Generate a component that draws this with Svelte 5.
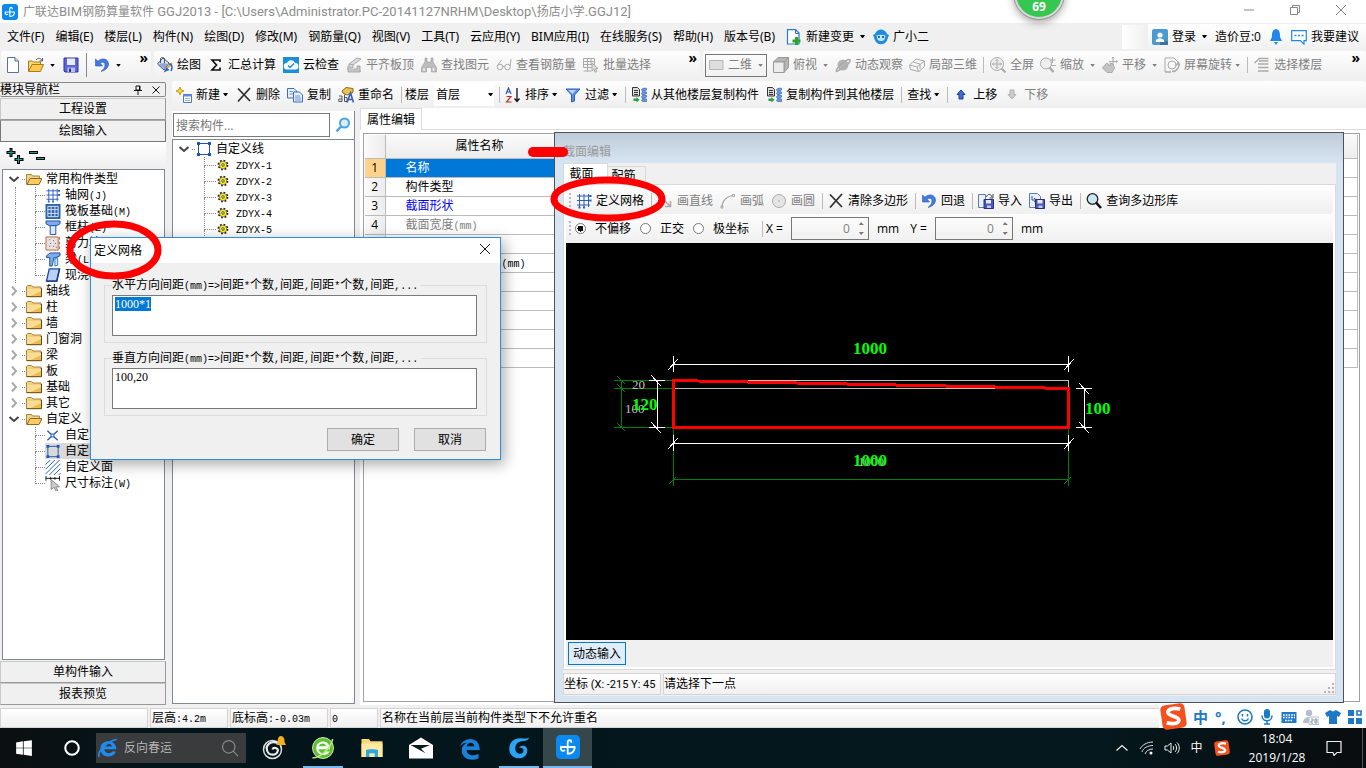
<script lang="ts">
  import { onMount } from "svelte";

  type Item = {
    icon?: string;
    text?: string;
    arrow?: boolean;
    off?: boolean;
    sep?: boolean;
    tight?: boolean;
  };

  const menus = [
    "文件(F)", "编辑(E)", "楼层(L)", "构件(N)", "绘图(D)", "修改(M)", "钢筋量(Q)",
    "视图(V)", "工具(T)", "云应用(Y)", "BIM应用(I)", "在线服务(S)", "帮助(H)", "版本号(B)",
  ];

  const drawBar: Item[] = [
    { icon: "paint", text: "绘图" },
    { icon: "sum", text: "汇总计算" },
    { icon: "cloud", text: "云检查" },
    { icon: "align", text: "平齐板顶", off: true },
    { icon: "binoculars", text: "查找图元", off: true },
    { icon: "glasses", text: "查看钢筋量", off: true },
    { icon: "batch", text: "批量选择", off: true },
  ];

  const viewBar: Item[] = [
    { icon: "cube", text: "俯视", arrow: true, off: true },
    { icon: "orbit", text: "动态观察", off: true },
    { icon: "part3d", text: "局部三维", off: true },
    { sep: true },
    { icon: "full", text: "全屏", off: true },
    { icon: "zoom", text: "缩放", arrow: true, off: true },
    { icon: "pan", text: "平移", arrow: true, off: true },
    { icon: "rotate", text: "屏幕旋转", arrow: true, tight: true, off: true },
    { sep: true },
    { icon: "floors", text: "选择楼层", off: true },
  ];

  const editBar: Item[] = [
    { icon: "new", text: "新建", arrow: true, tight: true },
    { icon: "cross", text: "删除" },
    { icon: "copy", text: "复制" },
    { icon: "rename", text: "重命名" },
    { sep: true },
  ];

  const sortBar: Item[] = [
    { sep: true },
    { icon: "sort", text: "排序", arrow: true, tight: true },
    { icon: "filter", text: "过滤", arrow: true, tight: true },
    { sep: true },
    { icon: "fromFloor", text: "从其他楼层复制构件" },
    { icon: "fromFloor", text: "复制构件到其他楼层" },
    { sep: true },
    { text: "查找", arrow: true, tight: true },
    { sep: true },
    { icon: "up", text: "上移" },
    { icon: "down", text: "下移", off: true },
  ];

  const sectionBar: Item[] = [
    { icon: "grid", text: "定义网格" },
    { sep: true },
    { icon: "line", text: "画直线", off: true },
    { icon: "arc", text: "画弧", off: true },
    { icon: "circle", text: "画圆", off: true },
    { sep: true },
    { icon: "cross", text: "清除多边形" },
    { sep: true },
    { icon: "undo", text: "回退" },
    { sep: true },
    { icon: "importIcon", text: "导入" },
    { icon: "exportIcon", text: "导出" },
    { sep: true },
    { icon: "query", text: "查询多边形库" },
  ];

  const tree = [
    {
      text: "常用构件类型",
      open: true,
      guide: true,
      children: [
        ["grid", "轴网(J)"],
        ["raft", "筏板基础(M)"],
        ["column", "框柱(Z)"],
        ["wall", "剪力墙(Q)"],
        ["beam", "梁(L)"],
        ["slab", "现浇板(B)"],
      ],
    },
    { text: "轴线" },
    { text: "柱" },
    { text: "墙" },
    { text: "门窗洞" },
    { text: "梁" },
    { text: "板" },
    { text: "基础" },
    { text: "其它" },
    {
      text: "自定义",
      open: true,
      children: [
        ["point", "自定义点"],
        ["poly", "自定义线(X)"],
        ["hatch", "自定义面"],
        ["dim", "尺寸标注(W)"],
      ],
    },
  ];

  const members = ["ZDYX-1", "ZDYX-2", "ZDYX-3", "ZDYX-4", "ZDYX-5"];

  const props = [
    { text: "名称", kind: "current" },
    { text: "构件类型" },
    { text: "截面形状", kind: "key" },
    { text: "截面宽度(mm)", kind: "readonly" },
    { text: "截面高度(mm)", kind: "readonly" },
    { text: "轴线距左边线距离(mm)" },
    { text: "其它钢筋" },
    { text: "备注" },
    { text: "其它属性" },
    { text: "锚固搭接" },
    { text: "显示样式" },
  ];

  const offsets = ["不偏移", "正交", "极坐标"];
  let offset = $state("不偏移");
  let horizontal = $state("1000*1");
  let vertical = $state("100,20");
  let search = $state("");
  let first: HTMLTextAreaElement;

  onMount(() => {
    first.focus();
    first.select();
  });

  const icons: Record<string, string> = {
    file: `<path d="M2.500 .5h7.500l3.500 3.500v11.500h-11z" fill="#fff" stroke="#5a7298"/><path d="M10 .5v3.500h3.500" fill="#cfdcf0" stroke="#5a7298"/>`,
    open: `<path d="M.5 14V4h4l1 1h7v3" fill="#f7d774" stroke="#a87b1c"/><path d="M.5 14.500 4 7.500h11.500l-3 7z" fill="#fbc94e" stroke="#a87b1c"/><path d="M8 3c2-2.500 5-2 6 .5M14.500 1v3h-3" fill="none" stroke="#555"/>`,
    save: `<path d="M1 1h14v14H2l-1-1z" fill="#5b67d8" stroke="#2f3792"/><path d="M4 1.500h8V8H4z" fill="#e8ecfb"/><path d="M4.500 10.500h7.500V15H4.500z" fill="#b9c0ea"/><path d="M6 11.500h2V15H6z" fill="#2f3792"/>`,
    undo: `<path d="M1.500 2v7H8.500L6.300 6.500C8 4.500 11 5 11 8c0 3-2 4.500-4 6.500 4-1 7.500-3.500 7.500-7.500 0-5-6.500-7-10.500-2.800z" fill="#3f7ae0" stroke="#2a58b5" stroke-width=".6"/>`,
    paint: `<path d="M.5 7 6 1l6 5-5 7z" fill="#dfe7f4" stroke="#46536b"/><path d="M3.500 6V2c0-2 4-2 4 0v4" fill="none" stroke="#46536b"/><path d="M1.500 7l5-1 5 1-4.500 5z" fill="#8aa6d6"/><path d="M15 6 9.500 11.500" stroke="#e2a32b" stroke-width="2"/><path d="m9.500 10.500-3 5 6-2.500z" fill="#2b62c4"/><path d="M12 7c3.500 0 3.500 4 2 7" stroke="#2b62c4" fill="none" stroke-width="1.500"/>`,
    sum: `<path d="M12 5V3H4l4.500 5L4 13h8v-2.500" fill="none" stroke="#111" stroke-width="1.700"/>`,
    cloud: `<path d="M0 0h16v16H0z" fill="#1d8fd6"/><path d="M4 12.500a3.200 3.200 0 0 1 0-6.400c1-3.600 6.500-4 8 0a3.200 3.200 0 0 1 .5 6.400z" fill="#fff"/><path d="m5 8.500 2 2 4-4" fill="none" stroke="#1d8fd6" stroke-width="1.500"/>`,
    align: `<path d="m3 7 8-6 4 1-8 6zM3 7v3l4 1V8M1 12l4-2v4h10" fill="#ddd" stroke="#a9a9a9"/><path d="M2 9v6h12V9h-3v3H8" fill="#c4c4c4" stroke="#a9a9a9"/>`,
    binoculars: `<path d="M4 1h2v4h4V1h2v4l3.500 5.500V15h-5v-4.500h-5V15h-5v-4.500L4 5z" fill="#bdbdbd" stroke="#999" stroke-width=".6"/><path d="M3 11v3M12.500 11v3" stroke="#eee" stroke-width="1.500"/>`,
    glasses: `<circle cx="4" cy="10" r="2.800"/><circle cx="11.500" cy="10" r="2.800"/><path d="M6.800 9.500h2M1.500 8.500l4-5.500M14 9l1-7"/>`,
    batch: `<path d="M.5 1.500h11v9H.5zM.5 4.500h11M.5 7.500h11M4.500 1.500v13M8 1.500v7M.5 14h8" /><path d="m9 6 6 5.500-2.500.2 1.300 3-1.600.6-1.200-3L9 14z" fill="#ddd"/>`,
    rect2d: `<path d="M1.500 3.500h13.500v9h-13.500z" fill="#ddd" stroke="#b5b5b5"/>`,
    cube: `<path d="m.5 5 4.500-4.500h10.500l-4.500 4.500zM11 5l4.500-4.500v10l-4.500 5z" fill="#b5b5b5" stroke="#999"/><path d="M.5 5h10.500v10.500H.5z" fill="#ececec" stroke="#999"/>`,
    orbit: `<circle cx="8" cy="8" r="5.500" fill="#b5b5b5" stroke="none"/><path d="M1.500 14.500c-2-2 10-13 13-12s-5 9-13 12z" stroke-width="1.500"/>`,
    part3d: `<path d="m.5 8 6.500-6 8.500 2v5.500l-5.500 5-8.500-2zM.5 8l7.500 2 7.500-6M8 10l1.500 4.500M4 5l7 2v5"/>`,
    full: `<circle cx="7" cy="7" r="6.500" fill="#eee"/><path d="M7 2.500v9M2.500 7h9M5.500 4 7 2.500 8.500 4M5.500 10 7 11.500 8.500 10M4 5.500 2.500 7 4 8.500M10 5.500 11.500 7 10 8.500"/><path d="m11.500 11.500 4 4" stroke-width="2"/>`,
    zoom: `<circle cx="6" cy="6.500" r="5.500" fill="#eee"/><path d="m9.500 10.500 4 4.500" stroke-width="2.500"/><path d="M10 3h5.500M12.500 0v6M11 8.500h5"/>`,
    pan: `<path d="m3 8 2-2 3 3V6l3 1 1.500 4-2.500 4.500H5l-4.500-4.500z" fill="#c4c4c4"/><path d="M11 0v8M7 4.500h8.500M10 1.500l1-1.500 1 1.500M14 3.500l1.500 1-1.500 1"/>`,
    rotate: `<path d="M1 15V1h9l4 4" stroke-width="1"/><circle cx="8" cy="8" r="4"/><path d="M8 14.500a6.500 6.500 0 0 0 6.500-8.500M12 8.500l2.300-3 1.700 3M1 15h6" stroke-width="1.500"/>`,
    floors: `<path d="m.5 6 5-4.500h9M4 7h10.500M4 10.500h10.500M4 14h10.500M5 4h9.500" stroke-width="1.500"/>`,
    new: `<path d="M4 0 5.200 2.800 8 4 5.200 5.200 4 8 2.800 5.200 0 4l2.800-1.200z" fill="#ffd83b" stroke="#b58a00" stroke-width=".8"/><path d="M7.500 7.500h8v8h-8z" fill="#fff" stroke="#5277b8"/><path d="M7.500 7.500h8v2h-8z" fill="#5b8be0"/><path d="M9 11.500h5M9 13.500h5" stroke="#9bb5df"/>`,
    cross: `<path d="M2 1.500 14 14M14 1 2 14.500" stroke="#333" stroke-width="1.800" fill="none"/>`,
    copy: `<path d="M.5 1.500h6.500l2.500 2.500v7h-9z" fill="#e6effc" stroke="#3f6cb5"/><path d="M6.500 5h6l3 3v7h-9z" fill="#e6effc" stroke="#3f6cb5"/><path d="M8 9h5M8 11h6M8 13h6M2.500 4.500H6M2.500 7H6" stroke="#6d93d2"/>`,
    rename: `<path d="m4 4 4-3.500 7 1v4L9 8 5 6z" fill="#e8c255" stroke="#8a6a16"/><path d="M1 9h3v5.500H.8V12H4M6.500 7.500v7h2.500v-4H6.500" fill="none" stroke="#555"/><path d="m9 15.500 3.500-9.500 3 9.500M10.500 12.500h4" fill="none" stroke="#2b5fc0" stroke-width="1.600"/>`,
    sort: `<path d="M1 7 3.500 1 6 7M2 5h3" fill="none" stroke="#2a55c8" stroke-width="1.200"/><path d="M1.500 9.500H6l-4.500 5.500h5" fill="none" stroke="#b33227" stroke-width="1.200"/><path d="M12 1v13M9.500 11.500 12 14.500l2.500-3" fill="none" stroke="#111" stroke-width="1.300"/>`,
    filter: `<path d="M1 2h14L9.500 8v6l-3 1V8z" fill="#5a8fe8" stroke="#2c5fb8"/><path d="M3 3h8L7.500 7z" fill="#bcd6fb"/>`,
    fromFloor: `<path d="M1.500.5h5l2 2V9h-7z" fill="#ddd" stroke="#333"/><path d="M3 3.500h4M3 5.500h4M3 7.500h4" stroke="#333"/><path d="M2.500 11.500h3v-1.500l3 2.700-3 2.800v-1.500h-3z" fill="#28a03c"/><path d="M10.500 2.500c1-1.500 4-1.500 5-1v1.500l-4 1.500zM10.500 6c1-1.500 4-1.500 5-1v1.500l-4 1.500zM10.500 9.500c1-1.500 4-1.500 5-1v1.500l-4 1.500zM10.500 13c1-1.500 4-1.500 5-1v2.500h-4z" fill="#6ea2e6" stroke="#2c5fa8" stroke-width=".7"/>`,
    up: `<path d="M8 3 12 7.500H10V12H6V7.500H4z" fill="#3d6fd8" stroke="#1c3f94"/>`,
    down: `<path d="M8 12 12 7.500H10V3H6v4.500H4z" fill="#ccc" stroke="#b0b0b0"/>`,
    grid: `<path d="M1 3h13M1 7.500h13M1 12h13M3.500 1v13M8 1v13M12.500 1v13" stroke="#2c5fc0" stroke-width="1" fill="none"/><path d="M13.500 2h2v2h-2zM13.500 6.500h2v2h-2zM2.500 13.500h2v2h-2zM7 13.500h2v2H7z" fill="#2c5fc0"/>`,
    line: `<path d="m2 2 11 11M13.500 8v5.500H8" stroke-width="1.500"/>`,
    arc: `<path d="M2 14C2 8 7 3 13 2.500" stroke-width="1.200"/><path d="M1 13h2v2H1zM12.500 1.500h2v2h-2z"/>`,
    circle: `<circle cx="8" cy="8" r="6.500" fill="#e4e4e4"/><path d="M7 8h2"/>`,
    importIcon: `<path d="M.5 1.500h7v13h-7z" fill="#eaf1fc" stroke="#5b7bb4"/><path d="M8.500 4c1-3.500 4.500-3.500 5.500 0M15 1v4h-3.500" stroke="#444" fill="none"/><path d="M6 6.500h9.500v9H6z" fill="#4a56b8" stroke="#283080"/><path d="M8 7h5v3.500H8z" fill="#e6e9fa"/><path d="M9 12.500h4V15H9z" fill="#c5caea"/>`,
    exportIcon: `<path d="M.5.500h8l3 3v11H.5z" fill="#eaf1fc" stroke="#5b7bb4"/><path d="M3 3v4h4M5 5l2.500 2L5 9" stroke="#2c4fa0" fill="none"/><path d="M6.500 6.500h9v9h-9z" fill="#4a56b8" stroke="#283080"/><path d="M8.500 7h5v3.500h-5z" fill="#e6e9fa"/><path d="M9.500 12.500h4V15h-4z" fill="#c5caea"/>`,
    query: `<circle cx="6.500" cy="6" r="5.300" fill="#c9e6f5" stroke="#222" stroke-width="1.300"/><path d="m10 9.500 5 5.500" stroke="#111" stroke-width="2.600"/>`,
    change: `<path d="M1.500 .7h8l3.500 3.300v11h-11.500z" fill="#fff" stroke="#2b78c9" stroke-width="1.200"/><path d="M9.500 1v3.500H13" fill="none" stroke="#2b78c9"/><path d="M10.500 8v8M6.500 12h8" stroke="#2da32b" stroke-width="3"/>`,
    mascot: `<path d="M2 5c2-6 10-6 12 0l2 1-1.500 4C13 17 3 17 1.500 10L0 6z" fill="#1f8ce0"/><path d="M3.500 6.500c3-1 6-1 9 0l-1 4c-2 2-5 2-7 0z" fill="#bfe5ff"/><circle cx="6" cy="8" r="1" fill="#0b3f7a"/><circle cx="10" cy="8" r="1" fill="#0b3f7a"/>`,
    user: `<rect width="16" height="16" rx="2" fill="#4b9cce"/><path d="m8 8 8 5v3H8z" fill="#35749c"/><circle cx="8" cy="6" r="2.600" fill="#fff"/><path d="M3.500 13c0-5 9-5 9 0z" fill="#fff"/>`,
    bell: `<path d="M8 0c-4 1-4 4-4 8l-2 4h12l-2-4c0-4 0-7-4-8zM6 13h4l-2 3z" fill="#2188ea"/>`,
    chat: `<path d="M.7 1.700h14.600v10H13v3.500L9.500 11.700H.7z" fill="#fff" stroke="#2188ea" stroke-width="1.200"/><path d="M3.500 6.500h2M7 6.500h2M10.500 6.500h2" stroke="#2188ea" stroke-width="1.300"/>`,
    folder: `<path d="M.5 13.500V3.500l1-1h4l1.500 1.500h8v9.500z" fill="#f3cf7a" stroke="#a8873c"/><path d="M1 6h14v7.500H1z" fill="#f9dd96"/><path d="M4 13.500 15 8v5.500z" fill="#eebb4c"/><path d="M.5 13.700h15V5" fill="none" stroke="#5f4a1c"/>`,
    folderOpen: `<path d="M.5 13.500v-10h5l1 1.500h7v3" fill="#efd188" stroke="#a8873c"/><path d="M1 13.500 4 7.500h12l-3 6z" fill="#f9cc62" stroke="#8a6c2a"/>`,
    raft: `<path d="M0 0h16v16H0z" fill="#2b62a8"/><path d="M2.500 2.500h11v11h-11zM6 6h4v4H6zM6 2.500v3.500M10 2.500v3.500M6 10v3.500M10 10v3.500M2.500 6h3.500M2.500 10h3.500M10 6h3.500M10 10h3.500" stroke="#dfeafb" fill="none"/>`,
    column: `<path d="M.5 1h15v3l-3.500 2H4L.5 4z" fill="#7eaaf0" stroke="#1d4c9c"/><path d="M5 6h6v9.500H5z" fill="#dbe8fd" stroke="#1d4c9c"/>`,
    wall: `<path d="M.5 1h13v14H.5z" fill="#e8e3df" stroke="#b4643c"/><path d="M4 4h1M8 5h1M5 8h1M10 8h1M4 11h1M8 11h1M11 12h1" stroke="#555"/><path d="M15 1v14" stroke="#b4643c" stroke-dasharray="3 2"/>`,
    beam: `<path d="M1 4 5 1h10.500v3l-4.500 2H9l-2 9H4.500V6H1z" fill="#7eaaf0" stroke="#1d4c9c"/><path d="M10 15V7l3-1v8z" fill="#cfe4fb" stroke="#2b7dc9"/>`,
    slab: `<path d="M4 1h11l-3 13H1z" fill="#b9cff3" stroke="#1d4c9c" stroke-width="1.400"/><path d="M1 14h11l3-13" fill="none" stroke="#123a80" stroke-width="1.500"/>`,
    point: `<path d="m2 3 11 10M13 3 2 13" stroke="#1d56b8" stroke-width="1.300"/><path d="M6 6.500h3v3H6z" fill="#fff" stroke="#1d56b8"/>`,
    poly: `<path d="M2.500 2.500h11v11h-11z" fill="none" stroke="#1d56b8" stroke-width="1"/><path d="M1 1h3v3H1zM12 1h3v3h-3zM1 12h3v3H1zM12 12h3v3h-3z" fill="#1d56b8"/>`,
    hatch: `<path d="M0 5 5 0M0 10 10 0M0 15 15 0M4 16 16 4M9 16l7-7M14 16l2-2" stroke="#1d56b8" fill="none"/>`,
    dim: `<path d="M.5 0v5M15 0v5M.5 2.500h14.500M5.500 1v3M10 1v3" stroke="#111"/><path d="m6 4 9 7.500-4 .3 2.200 3.500-2 .7-2-4L6 14.500z" fill="#ccc" stroke="#888"/>`,
    gear: `<circle cx="8" cy="8" r="6" fill="none" stroke="#222" stroke-width="2.400" stroke-dasharray="2.400 2.300"/><circle cx="8" cy="8" r="5" fill="#ffee1c" stroke="#333" stroke-width=".7"/><circle cx="8" cy="8" r="1.700" fill="#fff" stroke="#222"/>`,
    find: `<circle cx="9.500" cy="6" r="4.500" fill="#d8eefc" stroke="#4aa3e0" stroke-width="2"/><path d="m6 9.500-4.500 5" stroke="#4aa3e0" stroke-width="2.500"/>`,
    app: `<rect width="16" height="16" rx="3" fill="#0a8af0"/><path d="M7.800 12.500V5c0-2 2.400-2.200 2.400-.3M4.500 8h8M3.300 7.800c-.6 2.200 1 3.200 2.300 2.500M7.800 12.500c2.700 0 4.800-1.600 4.700-4.500" fill="none" stroke="#fff" stroke-width="1.200" stroke-linecap="round"/>`,
    expand: `<path d="M4 0v9M-.5 4.500h9M11.500 7v9M7.500 11.500h9" stroke="#000" stroke-width="3"/><path d="M4 1v7M.5 4.500h7M11.500 8v7M8.500 11.500h7" stroke="#16a393" stroke-width="1"/>`,
    collapse: `<path d="M0 4.500h9M7 10.500h9" stroke="#000" stroke-width="3"/><path d="M1 4.500h7M8 10.500h7" stroke="#16a393" stroke-width="1"/>`,
    // task bar
    start: `<path d="m1 3 6-1v5.700H1zM7.700 1.900 15 1v6.700H7.700zM1 8.300h6V14l-6-1zM7.700 8.300H15V15l-7.300-.9z" fill="#fff"/>`,
    ring: `<circle cx="8" cy="8" r="6" fill="none" stroke="#fff" stroke-width="1.800"/>`,
    ie: `<path d="M14.500 9H5c.3 3.500 5 4 6.500 1.800h3C12 17 1.500 16 2 8c.5-7.500 13-7 12.500 1zM5.200 6.700h6C10.500 3.500 6 3.500 5.200 6.700z" fill="#1d8ef0" fill-rule="evenodd"/><path d="M1 15c-2-3 5-12 14-14" fill="none" stroke="#1d8ef0" stroke-width="1.400"/>`,
    lens: `<circle cx="7" cy="7" r="5" fill="none" stroke="#888" stroke-width="1"/><path d="m10.500 10.500 4 4" stroke="#888"/>`,
    swirl: `<circle cx="7" cy="9" r="6" fill="none" stroke="#ddd"/><path d="M11 5C6 2.500 2 6 3.500 10c1 3 6 3.500 7 0 .5-2-3-3-3.500-1" fill="none" stroke="#eee" stroke-width="1.400"/><path d="M12.500 0c-2 .5-2 2-2 4L9.500 6h6.500l-1-2c0-2 0-3.500-2.500-4z" fill="#f0b020"/>`,
    green: `<circle cx="8" cy="8" r="7" fill="#5dc22d" stroke="#d8f0c8" stroke-width=".6"/><path d="M12.500 8.800H5c.5 3 4 3.200 5 1.500h2.500C10.500 14 3.500 13.500 3.500 8c0-6 9.500-6 9 .8zM5.200 6.800h5c-.7-2.300-4.300-2.300-5 0z" fill="#fff" fill-rule="evenodd"/><path d="M1 14.500C5 15 13 9 14.500 2" stroke="#b8ec7a" fill="none"/>`,
    explorer: `<path d="M1 2h5l1 1.500h8V14H1z" fill="#f7d978"/><path d="M1 5h14v9H1z" fill="#fde9a4"/><path d="M4 14V9.500c0-1 8-1 8 0V14h-2.200v-2.500H6.200V14z" fill="#2ba5e0"/>`,
    mail: `<path d="M0 6 8 1l8 5v9H0z" fill="#fff"/><path d="M1 6h13L8 8.500l3 3z" fill="#081a1e"/>`,
    edge: `<path d="M1.500 7C3 .5 14.500-.500 14.500 9.300H5.700c.3 4 5.300 4.200 8 2.500V15C9 17 2.500 15.500 2.500 9.500c0-2.500 1.500-4 3.500-5C3.800 4.600 2.300 5.500 1.500 7zM5.800 6.800h5c-.2-3-4.400-3-5 0z" fill="#1a80d8" fill-rule="evenodd"/>`,
    glodon: `<path d="M15 1c-1 2-3 2.500-5 2.500C7 3.500 5.500 6 5.500 8.500c0 4 5.500 4.500 5.500 1 0-1.500-1.500-2-3-1.500C9 5.500 14 6 13.500 10 13 17 1.500 16.500 1.500 8.500c0-5 4-7.500 8-7 2 .2 3.500.3 5.500-.5z" fill="#2aa4f4"/>`,
    wifi: `<path d="M1 9C3 5 8 2 14 2M3 12c1-4 6-6.500 11-6.500M6 14c1-3 4-5 8-5" fill="none" stroke="#ddd"/><circle cx="12" cy="13" r="1.500" fill="#fff"/>`,
    speaker: `<path d="M1 6h2.500L7 3v10L3.500 10H1zM9 6c1 1 1 3 0 4M11 4c2 2 2 6 0 8M13 2.500c3 3 3 8 0 11" fill="none" stroke="#eee"/>`,
    caret: `<path d="m2.500 10.500 5.500-5 5.500 5" fill="none" stroke="#eee" stroke-width="1.200"/>`,
    sogou: `<rect x=".8" y=".8" width="14.400" height="14.400" rx="2.500" fill="#f4511e" transform="rotate(-8 8 8)"/><path d="M12 3.700C9 2.700 5 3.200 4.700 5.500S11.500 8 11.200 10.300 6.500 12.500 4 11.700" fill="none" stroke="#fff" stroke-width="2.200"/>`,
    notice: `<path d="M1 1.500h14v11h-4L8 15.500 7 12.500H1z" fill="none" stroke="#eee" stroke-width="1.200"/>`,
    smile: `<circle cx="8" cy="8" r="7" fill="none" stroke="#1e78c8" stroke-width="1.600"/><path d="M5.500 5v2.500M10.500 5v2.500M4.500 9.500c1.500 3 5.500 3 7 0" fill="none" stroke="#1e78c8" stroke-width="1.500"/>`,
    mic: `<rect x="5" y="0" width="6" height="9.500" rx="3" fill="#1e78c8"/><path d="M3 6.500c0 7 10 7 10 0M8 11.500V15M5 15h6" fill="none" stroke="#1e78c8" stroke-width="1.500"/>`,
    keyboard: `<rect x=".5" y="3" width="15" height="11" fill="#1e78c8"/><path d="M2 6h12M2 8.500h12M4 11.500h8" stroke="#fff" stroke-width="1.300" stroke-dasharray="1.700 1"/>`,
    person: `<circle cx="6" cy="4" r="3.200" fill="#b3bfcc"/><path d="M0 14c0-8 12-8 12 0z" fill="#b3bfcc"/><path d="M6 8h10v7.500H6z" fill="#fff" stroke="#b3bfcc"/><path d="M8 10h2v2H8v2h2M12 10h2v4h-2zM12 12h2" fill="none" stroke="#8d9aaa"/>`,
    shirt: `<path d="m5 1 3 1.500L11 1l5 3-2 4-2-1v8H4V7L2 8 0 4z" fill="#1e78c8"/>`,
    blocks: `<path d="M1 1h6v6H1zM1 9h6v6H1zM9 9h6v6H9z" fill="#1e78c8"/><path d="M10 2h4v4h-4z" fill="none" stroke="#1e78c8" stroke-width="1.600"/>`,
  };

  const tasks = [
    { icon: "swirl", name: "助手" },
    { icon: "green", name: "浏览器", running: true },
    { icon: "explorer", name: "文件资源管理器" },
    { icon: "mail", name: "邮件" },
    { icon: "edge", name: "Edge" },
    { icon: "glodon", name: "广联达", running: true },
    { icon: "app", name: "GGJ2013", running: true, active: true },
  ];
</script>

{#snippet icon(name: string)}
  <svg class="icon" viewBox="0 0 16 16" fill="none" stroke-width="1" aria-hidden="true">{@html icons[name]}</svg>
{/snippet}

<!-- latin runs get a face of their own beside the han characters -->
{#snippet song(text: string, face = "half")}{#each text.split(/([ -~]+)/) as part, i}{#if i % 2}<span class={face}>{part}</span>{:else}{part}{/if}{/each}{/snippet}

{#snippet bar(items: Item[])}
  {#each items as item}
    {#if item.sep}
      <span class="sep"></span>
    {:else}
      <button class="tool" class:off={item.off} class:tight={item.tight} disabled={item.off}>
        {#if item.icon}{@render icon(item.icon)}{/if}
        <span>{item.text}</span>
        {#if item.arrow}<i class="arrow"></i>{/if}
      </button>
    {/if}
  {/each}
{/snippet}

{#snippet chevron(open: boolean)}
  <svg class="chevron" viewBox="0 0 12 12" fill="none" stroke-width="2" aria-hidden="true">
    {#if open}
      <path d="m1.500 4 4.500 4 4.500-4" stroke="#444" />
    {:else}
      <path d="m4 1.500 4 4.500-4 4.500" stroke="#aaa" />
    {/if}
  </svg>
{/snippet}

<div class="app">
  <header class="title">
    {@render icon("app")}
    <span>{@render song("广联达BIM钢筋算量软件 GGJ2013 - [C:\\Users\\Administrator.PC-20141127NRHM\\Desktop\\扬店小学.GGJ12]", "path")}</span>
    <div class="window-buttons">
      <button aria-label="最小化"><svg viewBox="0 0 12 12"><path d="M1 6h10" /></svg></button>
      <button aria-label="还原"><svg viewBox="0 0 12 12"><path d="M1.500 3.500h7v7h-7zM3.500 3.500v-2h7v7h-2" /></svg></button>
      <button aria-label="关闭"><svg viewBox="0 0 12 12"><path d="m1 1 10 10M11 1 1 11" /></svg></button>
    </div>
  </header>

  <nav class="menu">
    {#each menus as menu}
      <button>{menu}</button>
    {/each}
    <div class="extra">
      {@render bar([{ icon: "change", text: "新建变更", arrow: true }, { icon: "mascot", text: "广小二" }])}
    </div>
    <div class="blank"></div>
    <div class="account">
      {@render bar([{ icon: "user", text: "登录", arrow: true }, { text: "造价豆:0" }])}
      <button class="tool" aria-label="消息">{@render icon("bell")}</button>
      {@render bar([{ icon: "chat", text: "我要建议" }])}
    </div>
  </nav>

  <div class="toolbars">
    <div class="strip files">
      <button class="tool" aria-label="新建">{@render icon("file")}</button>
      <button class="tool" aria-label="打开">{@render icon("open")}<i class="arrow"></i></button>
      <button class="tool" aria-label="保存">{@render icon("save")}</button>
      <span class="sep"></span>
      <button class="tool" aria-label="撤销">{@render icon("undo")}<i class="arrow"></i></button>
      <span class="more">»</span>
    </div>
    <div class="strip draw">
      {@render bar(drawBar)}
      <span class="more">»</span>
    </div>
    <div class="strip view">
      <button class="tool off dimension" disabled>{@render icon("rect2d")}<span>二维</span><i class="arrow"></i></button>
      {@render bar(viewBar)}
      <span class="more">»</span>
    </div>
  </div>

  <main>
    <aside class="nav">
      <div class="nav-head">
        <span>模块导航栏</span>
        <svg viewBox="0 0 10 10"><path d="M3 1h4v4H3zM6.500 1v4M1 5.500h8M5 6v4" /></svg>
        <svg viewBox="0 0 10 10"><path d="m1.500 1.500 7 7M8.500 1.500l-7 7" /></svg>
      </div>
      <button class="page">工程设置</button>
      <button class="page pressed">绘图输入</button>
      <div class="nav-tools">
        <button aria-label="展开">{@render icon("expand")}</button>
        <button aria-label="折叠">{@render icon("collapse")}</button>
      </div>
      <ul class="tree">
        {#each tree as node}
          <li class="row">
            {@render chevron(!!node.open)}
            <span class="stub"></span>
            {@render icon(node.open ? "folderOpen" : "folder")}
            <span>{node.text}</span>
          </li>
          {#each node.children ?? [] as child, i}
            <li class="row">
              <span class="guide" class:shown={node.guide}></span>
              <span class="branch" class:last={i === node.children.length - 1}></span>
              <span class="leaf" class:selected={child[0] === "poly"}>
                {@render icon(child[0])}
                <span>{@render song(child[1])}</span>
              </span>
            </li>
          {/each}
        {/each}
      </ul>
      <button class="page">单构件输入</button>
      <button class="page">报表预览</button>
    </aside>

    <section class="work">
      <div class="strip edit">
        {@render bar(editBar)}
        <label for="floor">楼层</label>
        <span class="floor">
          <select id="floor"><option>首层</option></select>
          <i class="arrow"></i>
        </span>
        {@render bar(sortBar)}
      </div>
      <div class="panels">
        <div class="members">
          <div class="search">
            <input type="text" aria-label="搜索构件" placeholder="搜索构件..." bind:value={search} />
            <button aria-label="搜索">{@render icon("find")}</button>
          </div>
          <ul class="list">
            <li class="row">
              {@render chevron(true)}
              <span class="stub"></span>
              {@render icon("poly")}
              <span>自定义线</span>
            </li>
            {#each members as member}
              <li class="row">
                <span class="guide"></span>
                <span class="branch"></span>
                {@render icon("gear")}
                <span>{@render song(member)}</span>
              </li>
            {/each}
          </ul>
        </div>
        <div class="props">
          <div class="props-tabs"><button class="tab">属性编辑</button></div>
          <div class="props-body">
            <table>
              <thead>
                <tr><th class="num"></th><th>属性名称</th><th>属性值</th></tr>
              </thead>
              <tbody>
                {#each props as prop, i}
                  <tr class={prop.kind}>
                    <td class="num">{i + 1}</td>
                    <td class="name">{@render song(prop.text)}</td>
                    <td></td>
                  </tr>
                {/each}
              </tbody>
            </table>
          </div>
        </div>
      </div>
    </section>
  </main>

  <footer class="status">
    <div></div>
    <div>{@render song("层高:4.2m")}</div>
    <div>{@render song("底标高:-0.03m")}</div>
    <div>{@render song("0")}</div>
    <div>名称在当前层当前构件类型下不允许重名</div>
  </footer>

  <div class="taskbar">
    <button class="start" aria-label="开始">{@render icon("start")}</button>
    <button class="start" aria-label="Cortana">{@render icon("ring")}</button>
    <button class="find">
      {@render icon("ie")}
      <span>反向春运</span>
      {@render icon("lens")}
    </button>
    <div class="tasks">
      {#each tasks as task}
        <button class:running={task.running} class:active={task.active} aria-label={task.name}>
          {@render icon(task.icon)}
        </button>
      {/each}
    </div>
    <div class="tray">
      <span>{@render icon("caret")}</span>
      <span>{@render icon("wifi")}</span>
      <span>{@render icon("speaker")}</span>
      <span>中</span>
      <span>{@render icon("sogou")}</span>
    </div>
    <div class="clock"><span>18:04</span><span>2019/1/28</span></div>
    <button class="notice" aria-label="通知">{@render icon("notice")}</button>
    <div class="desktop"></div>
  </div>

  <!-- section editor window -->
  <section class="editor">
    <h2>截面编辑</h2>
    <div class="client">
      <div class="editor-tabs">
        <button class="on">截面</button>
        <button>配筋</button>
      </div>
      <div class="editor-page">
        <div class="strip first">
          <span class="grip"></span>
          {@render bar(sectionBar)}
        </div>
        <div class="strip second">
          <span class="grip"></span>
          <div class="radios">
            {#each offsets as name}
              <label><input type="radio" name="offset" value={name} bind:group={offset} />{name}</label>
            {/each}
          </div>
          <span class="sep"></span>
          {#each ["X", "Y"] as axis}
            <div class="coord">
              <label for={axis}>{axis} =</label>
              <span class="spin">
                <input id={axis} type="text" value="0" disabled />
                <span class="steps">
                  <button disabled aria-label="增加"></button>
                  <button disabled class="dec" aria-label="减少"></button>
                </span>
              </span>
              <span>mm</span>
            </div>
          {/each}
        </div>
        <div class="canvas">
          <svg width="766" height="397" viewBox="0 0 766 397" fill="none" shape-rendering="crispEdges">
            <g stroke="#008000">
              <path d="M48 137.500h59M48 145.500h59M48 184.500h59M55.500 137v47" />
              <path d="m51 133 8 8M51 141l8 8M51 180l8 8" />
              <path d="M107.500 184v59M502.500 184v59M107 236.500h395M103 241l7-7M498 241l7-7" />
            </g>
            <path d="M107 137.500h395.500v8M107 145.500h395" stroke="#c0c0c0" />
            <g stroke="#fff">
              <path d="M107 121.500h395M107.500 113v16M502.500 113v16M102 127l10-11M498 127l10-11" />
              <path d="M107 200.500h395M107.500 192v16M502.500 192v16M102 206l10-11M498 206l10-11" />
              <path d="M91.500 137v47M83 137.500h16M83 184.500h16M85 132l10 11M85 179l10 11" />
              <path d="M518.500 145v39M510 145.500h16M510 184.500h16M513 140l10 11M513 179l10 11" />
            </g>
            <path d="M107.500 137.500 502.500 145.500v39h-395z" stroke="#f00" stroke-width="3" />
            <g class="small">
              <text x="66" y="146">20</text>
              <text x="59" y="170">100</text>
              <text x="292" y="223">1000</text>
            </g>
            <g class="big">
              <text x="287" y="111">1000</text>
              <text x="66" y="167">120</text>
              <text x="519" y="171">100</text>
              <text x="287" y="223">1000</text>
            </g>
          </svg>
        </div>
        <div class="dynamic"><button>动态输入</button></div>
      </div>
      <div class="editor-status">
        <div>{@render song("坐标 (X: -215 Y: 45", "narrow")}</div>
        <div>请选择下一点<svg viewBox="0 0 11 11" aria-hidden="true"><path d="M8 1h2M8 5h2M4 5h2M8 9h2M4 9h2M0 9h2" /></svg></div>
      </div>
    </div>
  </section>

  <!-- grid definition dialog -->
  <div class="dialog" role="dialog" aria-label="定义网格">
    <div class="dialog-title">
      <span>定义网格</span>
      <button aria-label="关闭"><svg viewBox="0 0 12 12"><path d="m1 1 10 10M11 1 1 11" /></svg></button>
    </div>
    <form>
      <fieldset>
        <legend><label for="horizontal">{@render song("水平方向间距(mm)=>间距*个数,间距,间距*个数,间距,...")}</label></legend>
        <textarea id="horizontal" spellcheck="false" bind:this={first} bind:value={horizontal}></textarea>
      </fieldset>
      <fieldset>
        <legend><label for="vertical">{@render song("垂直方向间距(mm)=>间距*个数,间距,间距*个数,间距,...")}</label></legend>
        <textarea id="vertical" spellcheck="false" bind:value={vertical}></textarea>
      </fieldset>
      <div class="actions">
        <button type="button">确定</button>
        <button type="button">取消</button>
      </div>
    </form>
  </div>

  <div class="ime">
    {@render icon("sogou")}
    <b>中</b>
    <b>°,</b>
    {@render icon("smile")}
    {@render icon("mic")}
    {@render icon("keyboard")}
    {@render icon("person")}
    {@render icon("shirt")}
    {@render icon("blocks")}
  </div>

  <div class="speed">69</div>

  <svg class="marks" fill="none" stroke="#f00" aria-hidden="true">
    <ellipse cx="114" cy="250" rx="44" ry="26" stroke-width="7" />
    <ellipse cx="608" cy="199" rx="54" ry="19" stroke-width="7" />
    <path d="M533 152h30" stroke-width="10" stroke-linecap="round" />
  </svg>
</div>

<style>
  :global(body) {
    overflow: hidden;
  }
  .app {
    position: relative;
    display: flex;
    flex-direction: column;
    height: 100vh;
    overflow: hidden;
    background: #f0f0f0;
    color: #000;
    font: 12px/16px "Open Sans", "Noto Sans CJK SC", sans-serif;
    white-space: nowrap;
  }
  .app :global(*) {
    box-sizing: border-box;
  }
  button,
  input,
  select,
  textarea {
    margin: 0;
    padding: 0;
    border: 0;
    border-radius: 0;
    background: none;
    color: inherit;
    font: inherit;
  }
  ul {
    margin: 0;
    padding: 0;
    list-style: none;
  }
  .icon {
    flex: none;
    width: 16px;
    height: 16px;
  }
  .half {
    font-family: "Liberation Mono", monospace;
    font-size: 10px;
    line-height: 10px;
  }
  .path {
    font-family: Roboto, sans-serif;
    font-size: 13px;
  }
  .narrow {
    font-family: Roboto, sans-serif;
    font-size: 11px;
  }

  .title {
    display: flex;
    align-items: center;
    gap: 5px;
    height: 23px;
    padding: 0 2px;
    background: #fff;
    color: #8c8c8c;
  }
  .window-buttons {
    display: flex;
    margin-left: auto;
  }
  .window-buttons button {
    width: 46px;
    height: 20px;
  }
  .window-buttons svg,
  .dialog-title svg {
    width: 12px;
    height: 12px;
    fill: none;
    stroke: #888;
  }

  .menu {
    display: flex;
    align-items: center;
    height: 27px;
    padding-left: 1px;
  }
  .menu > button {
    padding: 0 5px 0 6px;
    font-family: "Noto Sans", "Noto Sans CJK SC", sans-serif;
  }
  .extra {
    display: flex;
    gap: 7px;
    margin-left: 6px;
  }
  .blank {
    width: 24px;
    height: 24px;
    margin-left: auto;
    background: linear-gradient(90deg, #fff, #f0f0f0);
  }
  .account {
    display: flex;
    align-items: center;
    gap: 7px;
    height: 26px;
    margin-left: 2px;
    padding: 0 7px 0 4px;
    background: linear-gradient(#fff, #f0f0f0);
  }

  .toolbars {
    display: flex;
    gap: 3px;
    height: 30px;
    padding: 1px 0 1px 1px;
  }
  .strip {
    display: flex;
    align-items: center;
    gap: 7px;
    border-radius: 3px;
    background: linear-gradient(#fdfdfd, #efefef);
  }
  .files {
    width: 150px;
    padding: 0 3px 0 4px;
  }
  .draw {
    width: 546px;
    padding: 0 3px;
  }
  .view {
    flex: 1;
    gap: 6px;
    padding: 0 6px 0 2px;
  }
  .tool {
    display: flex;
    align-items: center;
    gap: 4px;
    line-height: 20px;
  }
  .off {
    color: #808080;
  }
  .tool.off .icon {
    stroke: #aaa;
  }
  .arrow {
    width: 7px;
    height: 3px;
    margin-left: 1px;
    background: currentColor;
    clip-path: polygon(1px 0, 6px 0, 4px 3px, 3px 3px);
  }
  .tight .arrow {
    margin-left: -2px;
  }
  .sep {
    width: 1px;
    height: 16px;
    margin-right: -2px;
    background: #bbb;
  }
  .view .sep {
    margin-right: 0;
  }
  .files .sep {
    height: 24px;
    margin-right: 0;
    background: #888;
  }
  .more {
    align-self: flex-start;
    margin-left: auto;
    font-size: 14px;
    font-weight: 700;
    line-height: 14px;
  }
  .dimension {
    height: 23px;
    padding: 0 2px;
    border: 1px solid #777;
  }

  main {
    display: flex;
    flex: 1;
    gap: 6px;
    min-height: 0;
    padding-top: 1px;
  }
  .nav {
    display: flex;
    flex-direction: column;
    width: 166px;
    padding-top: 1px;
  }
  .nav-head {
    display: flex;
    align-items: center;
    gap: 8px;
    height: 15px;
    margin-bottom: 1px;
    padding-right: 4px;
    border: 1px solid #888;
    border-left: 0;
    border-radius: 2px;
  }
  .nav-head span {
    flex: 1;
    line-height: 13px;
  }
  .nav-head svg {
    width: 10px;
    height: 10px;
    fill: none;
    stroke: #111;
  }
  .page {
    height: 22px;
    border: 1px solid #999;
    border-top-color: #c8c8c8;
    border-left-color: #c8c8c8;
    line-height: 20px;
  }
  .pressed {
    border-color: #777;
    border-top-color: #aaa;
  }
  .nav-tools {
    display: flex;
    gap: 6px;
    height: 27px;
    padding: 6px 7px;
    background: linear-gradient(#fff, #eee);
  }
  .nav-tools button {
    height: 16px;
  }
  .nav-tools .icon {
    display: block;
    overflow: visible;
  }
  .tree {
    flex: 1;
    margin: 0 1px 1px 2px;
    padding: 1px 0 0 5px;
    overflow: hidden;
    border: 1px solid #828790;
    background: #fff;
  }
  .row,
  .leaf {
    display: flex;
    align-items: center;
    height: 16px;
    line-height: 16px;
  }
  .row .icon {
    margin-right: 4px;
  }
  .chevron {
    width: 12px;
    height: 12px;
  }
  .stub {
    width: 3px;
    margin: 0 1px 0 2px;
    border-top: 1px dotted #888;
  }
  .guide {
    width: 20px;
    height: 16px;
    margin-left: 7px;
  }
  .shown {
    border-left: 1px dotted #888;
  }
  .branch {
    width: 10px;
  }
  .branch::before,
  .branch::after {
    content: "";
    display: block;
    height: 8px;
    border-left: 1px dotted #888;
  }
  .branch::before {
    border-bottom: 1px dotted #888;
  }
  .last::after {
    border-color: transparent;
  }
  .leaf {
    flex: 1;
  }
  .leaf .icon {
    height: 15px;
  }
  .selected {
    background: #d9d9d9;
  }

  .work {
    display: flex;
    flex: 1;
    flex-direction: column;
    min-width: 0;
  }
  .edit {
    height: 27px;
    padding-left: 4px;
  }
  .edit label {
    margin: 0 -2px;
  }
  .floor {
    display: flex;
    align-items: center;
    width: 60px;
    height: 23px;
    margin-right: -2px;
    background: #fff;
  }
  .floor select {
    flex: 1;
    padding-left: 2px;
    appearance: none;
  }
  .panels {
    display: flex;
    flex: 1;
    gap: 5px;
    min-height: 0;
    padding-top: 3px;
  }
  .members {
    display: flex;
    flex-direction: column;
    width: 183px;
    margin-bottom: 1px;
    border-right: 1px solid #828790;
    background: #fff;
  }
  .search {
    display: flex;
    align-items: center;
    gap: 5px;
    height: 28px;
    padding: 1px;
  }
  .search input {
    width: 157px;
    height: 24px;
    padding: 0 2px;
    border: 1px solid #7a7a7a;
    background: #fff;
  }
  .search input::placeholder {
    color: #767676;
    opacity: 1;
  }
  .search button {
    width: 16px;
    height: 16px;
  }
  .list {
    flex: 1;
    padding: 1px 0 0 5px;
    border: 1px solid #828790;
    border-right: 0;
    background: #fff;
  }
  .list .guide {
    width: 19px;
  }
  .list .branch {
    width: 12px;
  }
  .list .branch + .icon {
    width: 12px;
    margin: 0 7px 0 1px;
  }
  .props {
    display: flex;
    flex: 1;
    flex-direction: column;
    min-width: 0;
    margin-top: -3px;
    background: #fff;
  }
  .props-tabs {
    height: 22px;
    border-bottom: 1px solid #dcdcdc;
  }
  .tab {
    height: 22px;
    padding: 0 6px;
    border: 1px solid #dcdcdc;
    border-bottom: 0;
    background: #fff;
    line-height: 18px;
  }
  .props-body {
    flex: 1;
    margin: 3px 6px 3px 3px;
    padding: 1px;
    border: 1px solid #a0a0a0;
    background: #fff;
  }
  table {
    width: 100%;
    border-collapse: collapse;
    table-layout: fixed;
  }
  th,
  td {
    height: 19px;
    padding: 0;
    border-right: 1px solid #bbb;
    border-bottom: 1px solid #bbb;
    line-height: 18px;
  }
  th {
    width: 189px;
    height: 23px;
    background: linear-gradient(#fafafa, #ececec);
    font-weight: 400;
  }
  th:last-child {
    width: auto;
  }
  .num {
    width: 20px;
    background: linear-gradient(90deg, #fafafa, #ececec);
    text-align: center;
  }
  .name {
    padding-left: 20px;
    overflow: hidden;
  }
  .current .num {
    background: #ffd28c;
  }
  .current .name {
    background: #0078d7;
    color: #fff;
  }
  .key .name {
    color: #00f;
  }
  .readonly .name {
    color: #808080;
  }

  .status {
    display: flex;
    gap: 2px;
    height: 23px;
    padding: 3px 0 0;
  }
  .status div {
    padding-left: 1px;
    border: 1px solid #d4d4d4;
    background: linear-gradient(#fff, #f0f0f0);
    line-height: 18px;
  }
  .status div:nth-child(1) {
    width: 148px;
  }
  .status div:nth-child(2) {
    width: 78px;
  }
  .status div:nth-child(3) {
    width: 98px;
  }
  .status div:nth-child(4) {
    width: 48px;
  }
  .status div:nth-child(5) {
    flex: 1;
  }

  .taskbar {
    display: flex;
    align-items: center;
    height: 40px;
    background: linear-gradient(90deg, #0b0f11, #03151a 12%, #04181d 80%, #090c0e);
    color: #fff;
  }
  .start {
    width: 48px;
    height: 40px;
  }
  .taskbar button {
    display: flex;
    align-items: center;
    justify-content: center;
  }
  .start .icon {
    width: 18px;
    height: 18px;
  }
  .taskbar .find {
    gap: 6px;
    width: 150px;
    height: 30px;
    padding: 0 6px 0 2px;
    background: #3a3b3c;
    color: #b5b5b5;
  }
  .find span {
    flex: 1;
    text-align: left;
  }
  .find .icon {
    width: 20px;
    height: 20px;
  }
  .tasks {
    display: flex;
    margin-left: 3px;
  }
  .tasks button {
    width: 49px;
    height: 40px;
  }
  .tasks .icon {
    width: 24px;
    height: 24px;
  }
  .tasks .running {
    background: linear-gradient(#76b9ed, #76b9ed) center bottom / 40px 2px no-repeat;
  }
  .tasks .active {
    border-bottom: 2px solid #76b9ed;
    background: #36474c;
  }
  .tray {
    display: flex;
    margin: 0 9px 0 auto;
  }
  .tray span {
    display: flex;
    justify-content: center;
    width: 25px;
  }
  .clock {
    display: flex;
    flex-direction: column;
    width: 68px;
    text-align: center;
    line-height: 19px;
  }
  .notice {
    width: 46px;
  }
  .desktop {
    width: 9px;
    height: 40px;
    padding-left: 5px;
  }
  .desktop::before {
    content: "";
    display: block;
    width: 1px;
    height: 40px;
    background: #555;
  }

  .editor {
    position: absolute;
    top: 132px;
    right: 22px;
    bottom: 65px;
    left: 554px;
    display: flex;
    flex-direction: column;
    padding: 0 7px 8px 8px;
    border: 1px solid #4c5359;
    background: linear-gradient(#becbd9, #d7e4f2 30px);
  }
  .editor h2 {
    height: 30px;
    margin: 0;
    padding-top: 2px;
    color: #999;
    font-size: 12px;
    font-weight: 400;
    line-height: 34px;
  }
  .client {
    display: flex;
    flex: 1;
    flex-direction: column;
    background: #f0f0f0;
  }
  .editor-tabs {
    display: flex;
    align-items: flex-end;
    height: 21px;
  }
  .editor-tabs button {
    width: 38px;
    height: 18px;
    padding-right: 6px;
    border: 1px solid #d9d9d9;
    border-width: 1px 1px 0 0;
    line-height: 16px;
  }
  .editor-tabs .on {
    width: 45px;
    height: 21px;
    padding-right: 8px;
    border-left-width: 1px;
    background: #fff;
  }
  .editor-page {
    display: flex;
    flex: 1;
    flex-direction: column;
    padding: 2px;
    border: 1px solid #d9d9d9;
    background: #fff;
  }
  .first {
    height: 27px;
    padding-left: 3px;
  }
  .second {
    gap: 6px;
    height: 29px;
    padding-left: 3px;
  }
  .grip {
    width: 2px;
    height: 16px;
    margin-right: -2px;
    background: repeating-linear-gradient(#bbb 0 2px, transparent 2px 4px);
  }
  .radios {
    display: flex;
    gap: 9px;
    margin-right: 7px;
  }
  .radios label {
    display: flex;
    align-items: center;
    gap: 9px;
  }
  .radios input {
    width: 11px;
    height: 11px;
    appearance: none;
    border: 1px solid #777;
    border-radius: 50%;
    background: #fff;
  }
  .radios input:checked {
    background: radial-gradient(#111 0 3px, #fff 3px);
  }
  .second .sep {
    margin-right: -3px;
  }
  .coord {
    display: flex;
    align-items: center;
    gap: 8px;
    margin-right: 5px;
  }
  .spin {
    display: flex;
    width: 78px;
    height: 23px;
    border: 1px solid #777;
    color: #808080;
  }
  .spin input {
    flex: 1;
    min-width: 0;
    text-align: right;
  }
  .steps {
    display: flex;
    flex-direction: column;
    justify-content: space-between;
    padding: 4px 3px 3px 8px;
  }
  .steps button {
    width: 7px;
    height: 4px;
    background: #777;
    clip-path: polygon(1px 3px, 6px 3px, 3px 0);
  }
  .steps .dec {
    clip-path: polygon(1px 0, 6px 0, 3px 3px);
  }
  .canvas {
    flex: 1;
    min-height: 0;
    overflow: hidden;
    background: #000;
  }
  .canvas svg {
    display: block;
  }
  .small {
    fill: #c0c0c0;
    font: 13px "Liberation Serif", serif;
  }
  .big {
    fill: #0f0;
    font: 700 17px "Liberation Serif", serif;
  }
  .dynamic {
    height: 27px;
    padding: 2px;
    background: #f0f0f0;
  }
  .dynamic button {
    width: 58px;
    height: 23px;
    border: 1px solid #0078d7;
    background: #e1eef9;
  }
  .editor-status {
    display: flex;
    gap: 2px;
    height: 26px;
    padding: 3px 0 1px;
  }
  .editor-status div {
    width: 98px;
    overflow: hidden;
    border: 1px solid #d4d4d4;
    background: linear-gradient(#fff, #f0f0f0);
    line-height: 20px;
  }
  .editor-status div:last-child {
    display: flex;
    flex: 1;
    align-items: flex-end;
    justify-content: space-between;
  }
  .editor-status svg {
    width: 11px;
    height: 11px;
    stroke: #b5b5b5;
    stroke-width: 2;
  }

  .dialog {
    position: absolute;
    top: 237px;
    left: 90px;
    width: 411px;
    border: 1px solid #2f8ce6;
    background: #f0f0f0;
    box-shadow: 3px 4px 14px rgba(0, 0, 0, 0.35);
  }
  .dialog-title {
    display: flex;
    justify-content: space-between;
    height: 25px;
    padding: 0 9px 0 3px;
    background: #fff;
    line-height: 25px;
  }
  .dialog-title svg {
    stroke: #111;
  }
  form {
    display: flex;
    flex-direction: column;
    padding: 14px 13px 8px;
  }
  fieldset {
    height: 66px;
    margin: 0 0 7px;
    padding: 2px 9px 0 7px;
    border: 1px solid #dcdcdc;
  }
  legend {
    padding: 0 3px 0 0;
    line-height: 16px;
  }
  textarea {
    display: block;
    width: 100%;
    height: 41px;
    padding: 1px 2px;
    border: 1px solid #7a7a7a;
    outline: 0;
    background: #fff;
    font: 12px/14px "Liberation Serif", serif;
    resize: none;
  }
  textarea::selection {
    background: #0078d7;
    color: #fff;
  }
  .actions {
    display: flex;
    justify-content: flex-end;
    gap: 15px;
    padding: 5px 1px 0 0;
  }
  .actions button {
    width: 72px;
    height: 23px;
    border: 1px solid #adadad;
    background: #e1e1e1;
  }

  .ime {
    position: absolute;
    right: 0;
    bottom: 40px;
    display: flex;
    align-items: center;
    gap: 6px;
    height: 23px;
    padding: 0 3px 0 1px;
    background: #fff;
    color: #1e78c8;
    font-size: 15px;
  }
  .ime .icon:first-child {
    width: 27px;
    height: 27px;
  }
  .ime b {
    width: 16px;
  }
  .speed {
    position: absolute;
    top: -31px;
    right: 302px;
    width: 50px;
    height: 50px;
    padding-top: 28px;
    border: 2px solid #d8d8d8;
    border-radius: 50%;
    outline: 1px solid #999;
    background: #38c653;
    box-shadow: 0 3px 8px rgba(0, 0, 0, 0.4);
    color: #fff;
    font-weight: 700;
    text-align: center;
  }
  .marks {
    position: absolute;
    top: 0;
    left: 0;
    width: 100%;
    height: 100%;
    pointer-events: none;
  }
</style>
